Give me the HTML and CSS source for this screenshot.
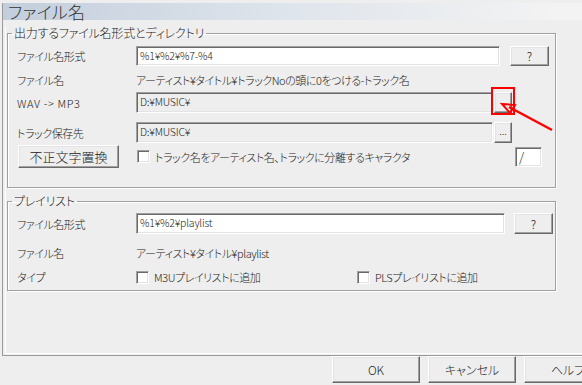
FILE: index.html
```html
<!DOCTYPE html>
<html lang="ja">

<head>
  <meta charset="UTF-8">
  <title>ファイル名</title>
  <link rel="stylesheet" href="styles.css">
</head>

<body>
  <div class="page">
    <h1 class="title">ファイル名</h1>
    <div class="page-in">
      <fieldset class="group g1">
        <legend>出力するファイル名形式とディレクトリ</legend>
        <div class="row r1">
          <span class="label">ファイル名形式</span>
          <span class="input fmt1">%1¥%2¥%7-%4</span>
          <span class="btn q1">?</span>
        </div>
        <div class="row r2">
          <span class="label">ファイル名</span>
          <span class="value">アーティスト¥タイトル¥トラックNoの頭に0をつける-トラック名</span>
        </div>
        <div class="row r3">
          <span class="label latin">WAV -&gt; MP3</span>
          <span class="input dir">D:¥MUSIC¥</span>
          <span class="btn browse"></span>
        </div>
        <div class="row r4">
          <span class="label">トラック保存先</span>
          <span class="input dir">D:¥MUSIC¥</span>
          <span class="btn browse">...</span>
        </div>
        <div class="row r5">
          <span class="btn fix">不正文字置換</span>
          <span class="check"></span>
          <span class="check-text">トラック名をアーティスト名、トラックに分離するキャラクタ</span>
          <span class="input sep">/</span>
        </div>
      </fieldset>

      <fieldset class="group g2">
        <legend>プレイリスト</legend>
        <div class="row r1">
          <span class="label">ファイル名形式</span>
          <span class="input fmt2">%1¥%2¥playlist</span>
          <span class="btn q2">?</span>
        </div>
        <div class="row r2">
          <span class="label">ファイル名</span>
          <span class="value">アーティスト¥タイトル¥playlist</span>
        </div>
        <div class="row r3">
          <span class="label">タイプ</span>
          <span class="check"></span>
          <span class="check-text m3u">M3Uプレイリストに追加</span>
          <span class="check"></span>
          <span class="check-text">PLSプレイリストに追加</span>
        </div>
      </fieldset>
    </div>
  </div>

  <div class="buttons">
    <span class="btn big">OK</span>
    <span class="btn big">キャンセル</span>
    <span class="btn big">ヘルプ</span>
  </div>

  <!-- 赤い注釈 -->
  <svg class="mark" width="582" height="385" viewBox="0 0 582 385">
    <rect x="492" y="88" width="22" height="26" fill="none" stroke="#f00" stroke-width="2" />
    <path d="M552 130 L509 107" stroke="#f00" stroke-width="2.5" fill="none" />
    <path d="M502 104 L515 105 L510 113 Z" stroke="#f00" stroke-width="2" fill="none" stroke-linejoin="miter" />
  </svg>
</body>

</html>
```

FILE: styles.css
```css
html,
body {
  margin: 0;
  padding: 0;
}

body {
  position: relative;
  width: 582px;
  height: 385px;
  overflow: hidden;
  background: #eeeeee;
  color: #222;
  font-family: "Noto Sans CJK JP", "Noto Sans", sans-serif;
  font-size: 11px;
  font-weight: 300;
  letter-spacing: -0.45px;
  font-feature-settings: "palt";
}

.page {
  margin-left: 2px;
  padding-bottom: 1px;
  border-left: 1px solid #9a9a9a;
  border-bottom: 1px solid #9a9a9a;
}

.title {
  margin: 3px 0 0 0;
  height: 17px;
  padding-left: 5px;
  font-size: 17px;
  font-weight: 300;
  letter-spacing: 0.3px;
  line-height: 17px;
  color: #333;
  background: linear-gradient(to right, #c3cedc 0%, #dfe5ec 50%, #f3f3f3 96%);
}

.page-in {
  box-sizing: border-box;
  height: 328px;
  margin-left: 2px;
  border-left: 1px solid #fff;
  border-bottom: 1px solid #fff;
}

.group {
  width: 547px;
  margin: 6px 0 0 1px;
  padding: 0;
  border: 1px solid #a0a0a0;
  box-shadow: 1px 1px 0 #fff, inset 1px 1px 0 #fff;
}

.group legend {
  margin-left: 4px;
  padding: 0 2px;
  font-size: 12px;
  letter-spacing: -0.2px;
  line-height: 14px;
}

.g1 {
  padding-bottom: 19px;
}

.g2 {
  padding-bottom: 4px;
}

.row {
  display: flex;
  align-items: center;
  padding-left: 9px;
}

.label {
  width: 119px;
  flex: 0 0 auto;
}

.label.latin {
  letter-spacing: 0.6px;
}

.g1 .r1 { margin-top: 5px; height: 21px; }
.g1 .r2 { margin-top: 5px; height: 18px; }
.g1 .r3 { margin-top: 3px; height: 21px; }
.g1 .r4 { margin-top: 9px; height: 21px; }
.g1 .r5 { margin-top: 2px; height: 23px; padding-left: 10px; }

.g2 .r1 { margin-top: 5px; height: 21px; }
.g2 .r2 { margin-top: 10px; height: 18px; }
.g2 .r3 { margin-top: 6px; height: 18px; }

.input {
  box-sizing: border-box;
  height: 20px;
  padding: 1px 0 0 3px;
  line-height: 16px;
  font-size: 10.5px;
  letter-spacing: -0.2px;
  background: #fff;
  border: 1px solid;
  border-color: #a0a0a0 #fff #fff #a0a0a0;
  box-shadow: inset 1px 1px 0 #696969, inset -1px -1px 0 #e3e3e3;
  white-space: nowrap;
}

.fmt1 { width: 364px; }
.fmt2 { width: 369px; height: 21px; }
.dir { width: 357px; height: 21px; background: #eeeeee; }
.sep { width: 27px; margin-left: auto; margin-right: 13px; font-size: 13px; }

.btn {
  box-sizing: border-box;
  display: flex;
  align-items: center;
  justify-content: center;
  height: 20px;
  background: #eeeeee;
  border: 1px solid;
  border-color: #fff #696969 #696969 #fff;
  box-shadow: inset -1px -1px 0 #a0a0a0, inset 1px 1px 0 #e3e3e3;
  font-size: 12px;
  letter-spacing: 0;
}

.q1 { width: 39px; margin-left: 10px; }
.q2 { width: 39px; height: 21px; margin-left: 9px; }
.browse { width: 18px; height: 21px; margin-left: 1px; font-size: 10px; padding-bottom: 4px; }
.fix { width: 101px; height: 23px; font-size: 13px; }

.check {
  box-sizing: border-box;
  width: 13px;
  height: 13px;
  flex: 0 0 auto;
  background: #fff;
  border: 1px solid;
  border-color: #a0a0a0 #fff #fff #a0a0a0;
  box-shadow: inset 1px 1px 0 #696969, inset -1px -1px 0 #e3e3e3;
}

.r5 .check { margin-left: 18px; }

.check-text {
  margin-left: 5px;
  white-space: nowrap;
}

.m3u { width: 203px; }

.buttons {
  display: flex;
  gap: 8px;
  height: 33px;
  padding-left: 332px;
  border-bottom: 1px solid #5d6450;
}

.btn.big {
  width: 88px;
  height: 27px;
  flex: 0 0 auto;
}

.mark {
  position: absolute;
  top: 0;
  left: 0;
  pointer-events: none;
}
```
